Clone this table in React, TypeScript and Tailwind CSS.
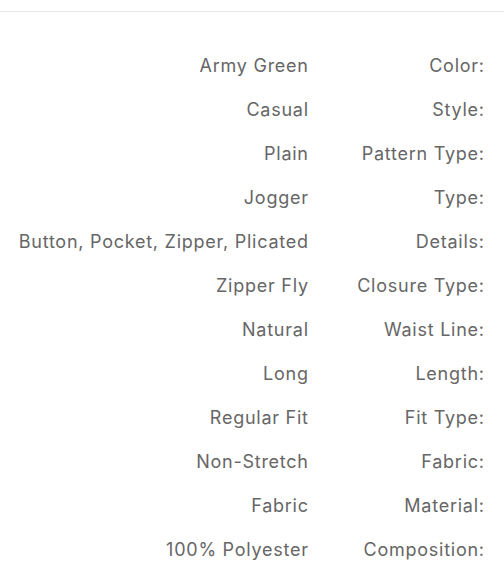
import React from "react";

const rows: [string, string][] = [
  ["Army Green", "Color:"],
  ["Casual", "Style:"],
  ["Plain", "Pattern Type:"],
  ["Jogger", "Type:"],
  ["Button, Pocket, Zipper, Plicated", "Details:"],
  ["Zipper Fly", "Closure Type:"],
  ["Natural", "Waist Line:"],
  ["Long", "Length:"],
  ["Regular Fit", "Fit Type:"],
  ["Non-Stretch", "Fabric:"],
  ["Fabric", "Material:"],
  ["100% Polyester", "Composition:"],
];

export default function App() {
  return (
    <div
      className="w-[504px] h-[575px] bg-white overflow-hidden"
      style={{ fontFamily: "Inter, 'Noto Sans', sans-serif" }}
    >
      <div className="h-[12px] border-b border-[#e6e6e6]" />
      <div className="pt-[31px] pr-[19.25px] flex flex-col">
        {rows.map(([v, l]) => (
          <div key={l} className="flex h-[44px] items-center text-[18px] tracking-[0.75px] text-[#666666]">
            <div className="flex-1 text-right whitespace-nowrap">{v}</div>
            <div className="w-[176px] text-right whitespace-nowrap">{l}</div>
          </div>
        ))}
      </div>
    </div>
  );
}
